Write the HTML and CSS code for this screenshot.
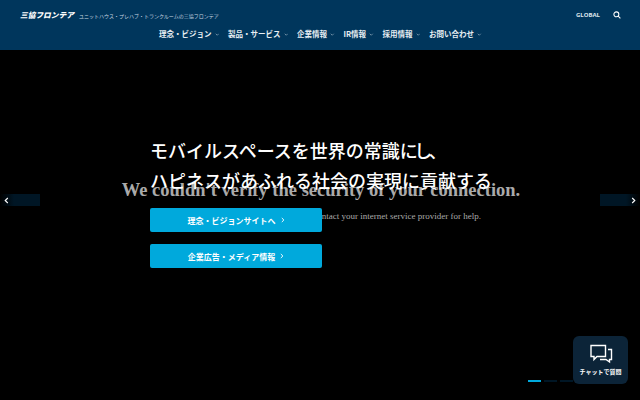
FILE: index.html
```html
<!DOCTYPE html>
<html lang="ja">
<head>
<meta charset="utf-8">
<title>三協フロンテア</title>
<link rel="stylesheet" href="styles.css">
</head>
<body>
<header class="site-header">
  <div class="top-row">
    <a class="logo">三協フロンテア</a>
    <span class="tagline">ユニットハウス・プレハブ・トランクルームの三協フロンテア</span>
    <a class="global">GLOBAL</a>
    <svg class="search" viewBox="0 0 10 10" width="8" height="8"><circle cx="4.2" cy="4.2" r="3.1"/><path d="M6.5 6.5 9.2 9.2"/></svg>
  </div>
  <nav class="main-nav">
    <a class="nav-item">理念・ビジョン<svg class="chev" viewBox="0 0 6 4"><path d="M1 1 3 3 5 1"/></svg></a>
    <a class="nav-item">製品・サービス<svg class="chev" viewBox="0 0 6 4"><path d="M1 1 3 3 5 1"/></svg></a>
    <a class="nav-item">企業情報<svg class="chev" viewBox="0 0 6 4"><path d="M1 1 3 3 5 1"/></svg></a>
    <a class="nav-item">IR情報<svg class="chev" viewBox="0 0 6 4"><path d="M1 1 3 3 5 1"/></svg></a>
    <a class="nav-item">採用情報<svg class="chev" viewBox="0 0 6 4"><path d="M1 1 3 3 5 1"/></svg></a>
    <a class="nav-item">お問い合わせ<svg class="chev" viewBox="0 0 6 4"><path d="M1 1 3 3 5 1"/></svg></a>
  </nav>
</header>
<main class="hero">
  <div class="error-msg">
    <h2 class="error-title">We couldn't verify the security of your connection.</h2>
    <p class="error-text">Try again later, or contact your internet service provider for help.</p>
  </div>
  <div class="hero-content">
    <h1 class="headline">モバイルスペースを世界の常識<span class="tight">にし</span>、<br>ハピネスがあふれる社会の実現に貢献する</h1>
    <a class="cta">理念・ビジョンサイトへ<svg class="cta-arrow" viewBox="0 0 5 7"><path d="M1 1 3.6 3.5 1 6"/></svg></a>
    <a class="cta">企業広告・メディア情報<svg class="cta-arrow" viewBox="0 0 5 7"><path d="M1 1 3.6 3.5 1 6"/></svg></a>
  </div>
  <button class="slide-btn prev"><svg viewBox="0 0 5 7"><path d="M3.8 1 1.2 3.5 3.8 6"/></svg></button>
  <button class="slide-btn next"><svg viewBox="0 0 5 7"><path d="M1.2 1 3.8 3.5 1.2 6"/></svg></button>
  <div class="pager"><span class="dot active"></span><span class="dot"></span><span class="dot"></span></div>
  <a class="chat">
    <svg class="chat-icon" viewBox="0 0 24 20" width="24" height="20">
      <path d="M2 1.5H16.5V12.5H8L5 15.5V12.5H2Z"/>
      <path d="M19 5.5H22.5V15.5H20.5V18L17 15.5H11"/>
    </svg>
    <span class="chat-label">チャットで質問</span>
  </a>
</main>
</body>
</html>
```
FILE: styles.css
```css
* { box-sizing: border-box; }
html, body { margin: 0; height: 100%; }
body {
  width: 640px;
  height: 400px;
  overflow: hidden;
  background: #000;
  color: #fff;
  font-family: "Noto Sans CJK JP", "Noto Sans", sans-serif;
}
.site-header {
  height: 50px;
  background: #00365c;
  display: flex;
  flex-direction: column;
}
.top-row {
  display: flex;
  align-items: center;
  height: 22px;
  margin-top: 4px;
  padding: 0 19px 0 20px;
}
.logo {
  font-size: 7.7px;
  font-weight: 900;
  font-style: italic;
  width: 54px;
  white-space: nowrap;
  line-height: 1;
}
.tagline {
  margin-left: 5px;
  font-size: 5px;
  color: #c8d6e0;
  white-space: nowrap;
  flex: 1;
}
.global {
  font-family: "Open Sans", sans-serif;
  font-size: 6px;
  font-weight: 700;
  color: #dfe7ee;
  margin-right: 13px;
}
.search { fill: none; stroke: #fff; stroke-width: 1.3; }
.main-nav {
  display: flex;
  gap: 9px;
  padding-left: 159px;
  height: 16px;
  align-items: center;
}
.nav-item {
  display: flex;
  align-items: center;
  font-size: 7.5px;
  font-weight: 700;
  color: #e8eef3;
  white-space: nowrap;
  line-height: 1;
}
.chev {
  width: 4.5px;
  height: 3px;
  margin-left: 3px;
  fill: none;
  stroke: #9db3c4;
  stroke-width: .9;
}
.hero {
  position: relative;
  height: 350px;
  background: #000;
}
.error-msg {
  position: absolute;
  top: 128px;
  left: 0;
  width: 640px;
  font-family: "Liberation Serif", serif;
  color: #aaa;
}
.error-title {
  margin: 0;
  padding-left: 2px;
  text-align: center;
  font-size: 18.5px;
  font-weight: 700;
  line-height: 24px;
}
.error-text {
  width: 481px;
  margin: 7px 0 0;
  text-align: right;
  font-size: 9px;
  line-height: 14px;
  color: #aaa;
}
.hero-content {
  position: relative;
  padding: 85px 0 0 150px;
  width: 600px;
}
.headline {
  margin: 0 0 13px;
  font-size: 18px;
  font-weight: 500;
  line-height: 30px;
  white-space: nowrap;
}
.tight { letter-spacing: -3.5px; }
.cta {
  display: flex;
  align-items: center;
  justify-content: center;
  width: 172px;
  height: 24px;
  margin-bottom: 12px;
  background: #00a9dc;
  border-radius: 2px;
  font-size: 8px;
  font-weight: 700;
  color: #fff;
}
.cta-arrow {
  width: 4px;
  height: 6px;
  margin-left: 5px;
  fill: none;
  stroke: #fff;
  stroke-width: 1.2;
}
.slide-btn {
  position: absolute;
  top: 144px;
  width: 40px;
  height: 12px;
  padding: 0;
  border: 0;
  display: flex;
  align-items: center;
}
.slide-btn svg {
  width: 5px;
  height: 7px;
  fill: none;
  stroke: #fff;
  stroke-width: 1.1;
}
.prev {
  left: 0;
  padding-left: 4px;
  background: linear-gradient(90deg, #000, #001625 35%, #001625);
}
.next {
  right: 0;
  justify-content: flex-end;
  padding-right: 4px;
  background: linear-gradient(270deg, #000, #001625 35%, #001625);
}
.pager {
  position: absolute;
  left: 528px;
  top: 330px;
  display: flex;
  gap: 3px;
}
.dot {
  width: 13px;
  height: 2px;
  background: #001625;
}
.dot.active { background: #00a9dc; }
.chat {
  position: absolute;
  left: 573px;
  top: 286px;
  width: 55px;
  height: 48px;
  background: #0c2438;
  border-radius: 6px;
  display: flex;
  flex-direction: column;
  align-items: center;
  padding-top: 8px;
}
.chat-icon {
  fill: none;
  stroke: #fff;
  stroke-width: 1.4;
}
.chat-label {
  margin-top: 3px;
  font-size: 6px;
  font-weight: 700;
  line-height: 10px;
  white-space: nowrap;
}
```
